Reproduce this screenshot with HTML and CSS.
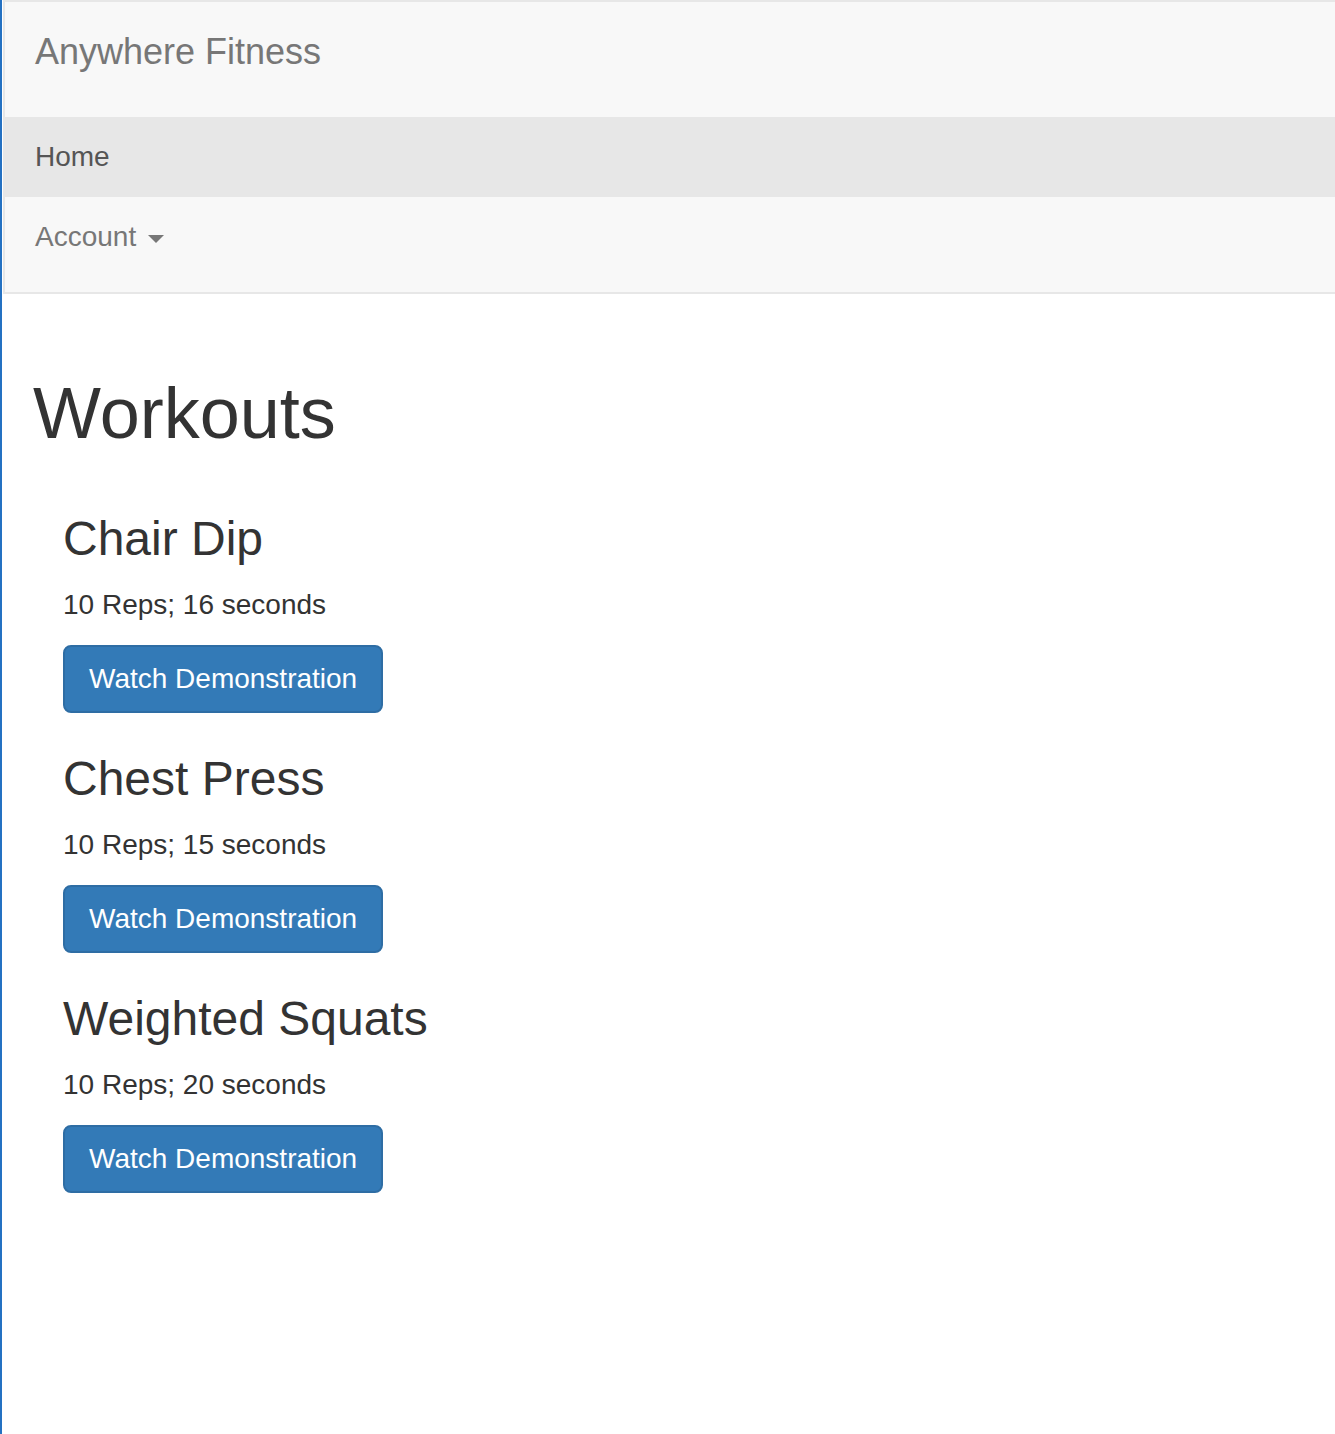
FILE: index.html
```html
<!DOCTYPE html>
<html lang="en">
<head>
<meta charset="utf-8">
<title>Anywhere Fitness</title>
<link rel="stylesheet" href="styles.css">
</head>
<body>
<div class="frame">
  <nav class="navbar">
    <div class="navbar-header">
      <a class="brand" href="#">Anywhere Fitness</a>
    </div>
    <ul class="nav">
      <li class="active"><a href="#">Home</a></li>
      <li><a href="#">Account <span class="caret"></span></a></li>
    </ul>
  </nav>
  <main class="container">
    <h1 class="title">Workouts</h1>
    <div class="workouts">
      <div class="workout">
        <h3>Chair Dip</h3>
        <p>10 Reps; 16 seconds</p>
        <button class="btn">Watch Demonstration</button>
      </div>
      <div class="workout">
        <h3>Chest Press</h3>
        <p>10 Reps; 15 seconds</p>
        <button class="btn">Watch Demonstration</button>
      </div>
      <div class="workout">
        <h3>Weighted Squats</h3>
        <p>10 Reps; 20 seconds</p>
        <button class="btn">Watch Demonstration</button>
      </div>
    </div>
  </main>
</div>
</body>
</html>
```
FILE: styles.css
```css
html, body {
  margin: 0;
  padding: 0;
  background: #fff;
}
body {
  font-family: "Liberation Sans", Arial, Helvetica, sans-serif;
  font-size: 28px;
  line-height: 40px;
  color: #333;
}
.frame {
  min-height: 1434px;
  border-left: 2px solid #2471c2;
  padding-left: 1px;
  box-sizing: border-box;
}
.navbar {
  background: #f8f8f8;
  border: 2px solid #e7e7e7;
  border-right: 0;
  margin-bottom: 40px;
}
.navbar-header {
  height: 100px;
  padding: 0 30px;
}
.brand {
  display: block;
  padding: 30px 0;
  font-size: 36px;
  line-height: 40px;
  color: #777;
  text-decoration: none;
}
.nav {
  list-style: none;
  margin: 15px 0;
  padding: 0;
}
.nav a {
  display: block;
  padding: 20px 30px;
  line-height: 40px;
  color: #777;
  text-decoration: none;
}
.nav .active a {
  background: #e7e7e7;
  color: #555;
}
.caret {
  display: inline-block;
  width: 0;
  height: 0;
  margin-left: 4px;
  vertical-align: middle;
  border-top: 8px solid;
  border-left: 8px solid transparent;
  border-right: 8px solid transparent;
}
.container {
  display: flow-root;
  padding: 0 30px;
}
.title {
  font-size: 72px;
  font-weight: 500;
  line-height: 79px;
  margin: 40px 0 20px;
}
.workouts {
  display: flow-root;
  padding: 0 30px;
}
.workout h3 {
  font-size: 48px;
  font-weight: 500;
  line-height: 52px;
  margin: 40px 0 20px;
}
.workout p {
  margin: 0 0 20px;
}
.btn {
  display: inline-block;
  vertical-align: top;
  font-family: inherit;
  font-size: 28px;
  line-height: 40px;
  height: 68px;
  padding: 12px 24px;
  color: #fff;
  background: #337ab7;
  border: 2px solid #2e6da4;
  border-radius: 8px;
  cursor: pointer;
}
```
